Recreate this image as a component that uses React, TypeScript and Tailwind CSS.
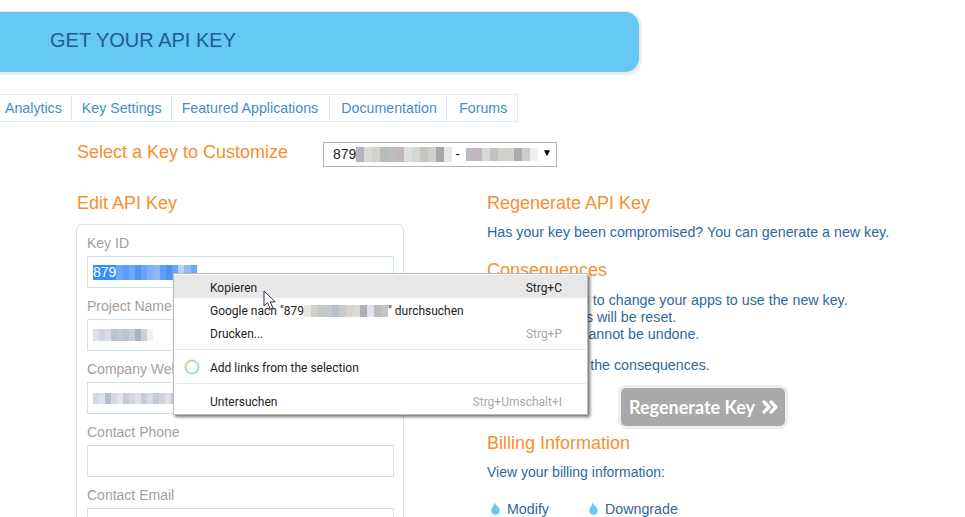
import { ChevronsRight } from 'lucide-react';

// Pixelated blocks that hide the key values in the screenshot
function Blur({ cells, className = '', cell = 'w-[6px]' }: { cells: string[]; className?: string; cell?: string }) {
    return (
        <span className={`inline-flex ${className}`}>
            {cells.map((c, i) => (
                <span key={i} className={`h-full ${cell} ${c}`} />
            ))}
        </span>
    );
}

const selectA = ['bg-[#b5b3c0]', 'bg-[#d9d9d5]', 'bg-[#cfd2cd]', 'bg-[#b8bbb9]', 'bg-[#bdbcbe]', 'bg-[#c1b8bd]', 'bg-[#dcdee0]', 'bg-[#d5d6d6]', 'bg-[#c5c7c0]', 'bg-[#d0d0cc]', 'bg-[#a8a8ac]', 'bg-[#e4e6ea]'];
const selectB = ['bg-[#bdb8c5]', 'bg-[#c5b8bf]', 'bg-[#d5dad8]', 'bg-[#c0c3c2]', 'bg-[#d0d2cc]', 'bg-[#cfd2d0]', 'bg-[#acadb0]', 'bg-[#cfcccf]', 'bg-[#eeeff2]'];
const selected = ['bg-[#6aa5fb]', 'bg-[#5a9dfb]', 'bg-[#70a8fb]', 'bg-[#4f96fa]', 'bg-[#69a4fb]', 'bg-[#7fb0fb]', 'bg-[#8ab7fb]', 'bg-[#5f9ffa]', 'bg-[#4c94fa]', 'bg-[#6aa5fb]', 'bg-[#b7d3fa]', 'bg-[#8fbbfb]', 'bg-[#6fa8fb]'];
const project = ['bg-[#dde0e8]', 'bg-[#cfd3de]', 'bg-[#d8dbe3]', 'bg-[#bcc2d0]', 'bg-[#c2c8d4]', 'bg-[#bcc2d0]', 'bg-[#c9cdd8]', 'bg-[#aab1c2]', 'bg-[#ccd0da]', 'bg-[#eef1f5]'];
const company = ['bg-[#d5d8e0]', 'bg-[#dfe2e8]', 'bg-[#b5bccb]', 'bg-[#d5d8e0]', 'bg-[#e2e4ea]', 'bg-[#c5cad5]', 'bg-[#d3d6de]', 'bg-[#dde0e6]', 'bg-[#c9cdd8]', 'bg-[#d8dbe2]', 'bg-[#c5cad6]', 'bg-[#cfd3dc]', 'bg-[#dde0e6]', 'bg-[#c9cdd8]'];
const search = ['bg-[#e8e6e2]', 'bg-[#d2d0c9]', 'bg-[#c4c8c8]', 'bg-[#c6c9cc]', 'bg-[#b8c0cc]', 'bg-[#c8cbc8]', 'bg-[#d6d4cc]', 'bg-[#dcdad4]', 'bg-[#b0b0b0]', 'bg-[#dfe4ea]', 'bg-[#bcbcbc]', 'bg-[#c4c4c4]'];

const fields = [
    { label: 'Key ID', value: 'id' },
    { label: 'Project Name', value: 'project' },
    { label: 'Company Website', value: 'company' },
    { label: 'Contact Phone', value: '' },
    { label: 'Contact Email', value: '' },
];

const tabs = [
    { label: 'Key Settings', cls: 'w-[100px] pl-[10px]' },
    { label: 'Featured Applications', cls: 'w-[159px] pl-[10px]' },
    { label: 'Documentation', cls: 'w-[117px] pl-[11px]' },
    { label: 'Forums', cls: 'w-[70px] pl-[12px]' },
];

function Drop({ className = '' }: { className?: string }) {
    return (
        <svg width="9" height="13" viewBox="0 0 9 13" className={className}>
            <path d="M3.4 0.3 C4 3 8.8 5.2 8.8 8.8 C8.8 11.2 6.9 12.8 4.5 12.8 C2 12.8 0.2 11 0.2 8.6 C0.2 6.2 3.2 4 3.4 0.3 Z" fill="#66c8f5" />
        </svg>
    );
}

function MenuItem({ label, shortcut, active, muted }: { label: React.ReactNode; shortcut?: string; active?: boolean; muted?: boolean }) {
    return (
        <div className={`flex h-[23px] items-center justify-between pl-[36px] pr-[25px] ${active ? 'bg-[#e8e8e8]' : ''}`}>
            <span className="flex items-center">{label}</span>
            {shortcut && <span className={muted ? 'text-[#a8a8a8]' : 'text-[#222]'}>{shortcut}</span>}
        </div>
    );
}

export default function App() {
    return (
        <div className="relative h-[517px] w-[965px] overflow-hidden bg-white pt-3 font-['Liberation_Sans',Arial,sans-serif] text-[14.25px] text-[#2c6a9f]">
            <div className="-ml-5 flex h-[60px] w-[659px] items-center rounded-r-[14px] bg-[#66c8f5] pb-[4px] pl-[70px] text-[20px] text-[#1f5c97] shadow-[1px_1px_0_2px_#ececec]">
                GET YOUR API KEY
            </div>

            <div className="mt-[22px] flex h-[28px] w-[518px] border border-l-0 border-[#d8ecf8] text-[14.2px] leading-[26px] text-[#3f8fc6]">
                <div className="w-[72px] border-r border-[#d8ecf8] pl-[5px]">Analytics</div>
                {tabs.map((tab) => (
                    <div key={tab.label} className={`${tab.cls} border-r border-[#d8ecf8] whitespace-nowrap last:border-r-0`}>
                        {tab.label}
                    </div>
                ))}
            </div>

            <div className="mt-[20px] flex h-[25px] items-center pl-[77px]">
                <h2 className="w-[246px] pb-[4px] text-[18px] text-[#f7902c]">Select a Key to Customize</h2>
                <div className="flex h-[25px] w-[234px] items-center border border-[#b4b4b4] pl-[9px] text-[14px] text-[#222]">
                    879
                    <Blur cells={selectA} cell="w-[8px]" className="h-[15px]" />
                    <span className="mr-[6px] ml-[3px]">-</span>
                    <Blur cells={selectB} cell="w-[8px]" className="h-[13px]" />
                    <span className="mb-[3px] ml-[4px] text-[10px] leading-none text-black">▼</span>
                </div>
            </div>

            <div className="mt-[25px] flex">
                <div className="ml-[76px] w-[328px]">
                    <h2 className="h-[22px] pl-px text-[18px] leading-[22px] text-[#f7902c]">Edit API Key</h2>
                    <div className="mt-[10px] rounded-[6px] border border-[#cfe5f0] pt-[8px] pr-[9px] pl-[10px]">
                        {fields.map((f) => (
                            <div key={f.label} className="mb-[8px]">
                                <div className="h-[20px] text-[14px] leading-[20px] text-[#a0a0a0]">{f.label}</div>
                                <div className="mt-[3px] flex h-[32px] items-center border border-[#cfe3ef] px-[5px]">
                                    {f.value === 'id' && (
                                        <span className="flex h-[15px] items-center bg-[#3390ff] text-[14px] text-white">
                                            879
                                            <Blur cells={selected} cell="w-[6.2px]" className="h-[15px]" />
                                        </span>
                                    )}
                                    {f.value === 'project' && <Blur cells={project} className="h-[12px]" />}
                                    {f.value === 'company' && <Blur cells={company} className="h-[11px]" />}
                                </div>
                            </div>
                        ))}
                    </div>
                </div>

                <div className="ml-[83px] w-[440px]">
                    <h2 className="h-[22px] text-[18px] leading-[22px] text-[#f7902c]">Regenerate API Key</h2>
                    <p className="mt-[8px] h-[20px] leading-[20px] whitespace-nowrap">Has your key been compromised? You can generate a new key.</p>
                    <h2 className="mt-[17px] h-[22px] text-[18px] leading-[22px] text-[#f7902c]">Consequences</h2>
                    <p className="mt-[11px] leading-[17px] whitespace-nowrap">
                        <span className="pl-[3px]">You'll also need to change your apps to use the new key.</span>
                        <br />
                        All your statistics will be reset.
                        <br />
                        This operation cannot be undone.
                    </p>
                    <p className="mt-[12px] h-[20px] pl-[20px] leading-[20px]">I understand the consequences.</p>
                    <button className="mt-[13px] ml-[134px] flex h-[38px] w-[164px] items-center rounded-[5px] bg-[#a9a9a9] pl-[8px] font-['Lato',sans-serif] text-[18px] font-bold text-white shadow-[0_0_0_3px_#eeeeee]">
                        Regenerate Key
                        <ChevronsRight size={24} strokeWidth={3.2} className="ml-[3px]" />
                    </button>
                    <h2 className="mt-[6px] h-[22px] text-[18px] leading-[22px] text-[#f7902c]">Billing Information</h2>
                    <p className="mt-[8px] h-[20px] text-[14px] leading-[20px]">View your billing information:</p>
                    <div className="mt-[18px] flex h-[20px] items-center pl-[4px]">
                        <Drop className="-mt-[3px]" />
                        <span className="ml-[7px] w-[82px]">Modify</span>
                        <Drop className="-mt-[3px]" />
                        <span className="ml-[7px]">Downgrade</span>
                    </div>
                </div>
            </div>

            {/* Chrome context menu */}
            <div className="absolute top-[273px] left-[173px] h-[142px] w-[415px] border border-[#bababa] bg-white pt-px font-['Roboto',sans-serif] text-[12px] text-[#222] shadow-[2px_2px_3px_rgba(0,0,0,0.55)]">
                <div className="[&>div]:pt-[2px]">
                    <MenuItem label="Kopieren" shortcut="Strg+C" active />
                    <MenuItem
                        label={
                            <>
                                Google nach "879
                                <Blur cells={search} cell="w-[7px]" className="h-[12px]" />
                                " durchsuchen
                            </>
                        }
                    />
                    <MenuItem label="Drucken..." shortcut="Strg+P" muted />
                </div>
                <div className="mx-[1px] mt-[5px] h-px bg-[#e8e8e8]" />
                <div className="relative mt-[6px]">
                    <svg width="16" height="16" viewBox="0 0 16 16" className="absolute top-[3px] left-[10px]">
                        <path d="M12.6 3.4 A6.5 6.5 0 0 0 3.4 12.6" fill="none" stroke="#bcd6a8" strokeWidth="2" />
                        <path d="M12.6 3.4 A6.5 6.5 0 0 1 3.4 12.6" fill="none" stroke="#a9d4ea" strokeWidth="2" />
                    </svg>
                    <MenuItem label="Add links from the selection" />
                </div>
                <div className="mx-[1px] mt-[4px] h-px bg-[#e8e8e8]" />
                <div className="mt-[6px]">
                    <MenuItem label="Untersuchen" shortcut="Strg+Umschalt+I" muted />
                </div>
            </div>

            {/* Mouse pointer */}
            <svg width="15" height="22" viewBox="0 0 15 22" className="absolute top-[290px] left-[263px]">
                <path d="M1 1 L1 16 L4.6 12.8 L7.2 19 L9.8 17.9 L7.2 11.9 L12.2 11.9 Z" fill="#fff" stroke="#2b3038" strokeWidth="1" />
            </svg>
        </div>
    );
}
